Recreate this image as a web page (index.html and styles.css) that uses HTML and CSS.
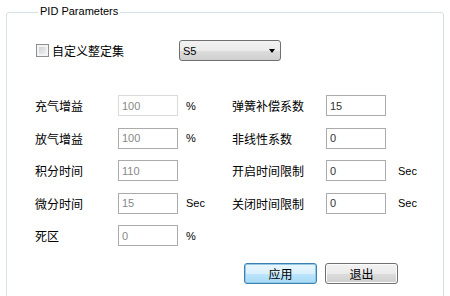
FILE: index.html
```html
<!DOCTYPE html>
<html>
<head>
  <meta charset="utf-8">
  <title>PID Parameters</title>
  <link rel="stylesheet" href="styles.css">
</head>
<body>
  <fieldset class="group">
    <legend>PID Parameters</legend>

    <div class="preset">
      <label class="check"><span class="box"></span>自定义整定集</label>
      <div class="combo">
        <span class="comboText">S5</span>
        <span class="arrow"></span>
      </div>
    </div>

    <div class="params">
      <span class="label">充气增益</span>
      <input class="field dim light" type="text" value="100" readonly>
      <span class="unit">%</span>
      <span class="label">弹簧补偿系数</span>
      <input class="field" type="text" value="15" readonly>
      <span class="unit right"></span>

      <span class="label">放气增益</span>
      <input class="field dim" type="text" value="100" readonly>
      <span class="unit">%</span>
      <span class="label">非线性系数</span>
      <input class="field" type="text" value="0" readonly>
      <span class="unit right"></span>

      <span class="label">积分时间</span>
      <input class="field dim" type="text" value="110" readonly>
      <span class="unit"></span>
      <span class="label">开启时间限制</span>
      <input class="field" type="text" value="0" readonly>
      <span class="unit right">Sec</span>

      <span class="label">微分时间</span>
      <input class="field dim" type="text" value="15" readonly>
      <span class="unit">Sec</span>
      <span class="label">关闭时间限制</span>
      <input class="field" type="text" value="0" readonly>
      <span class="unit right">Sec</span>

      <span class="label">死区</span>
      <input class="field dim" type="text" value="0" readonly>
      <span class="unit">%</span>
    </div>

    <div class="actions">
      <button class="btn default">应用</button>
      <button class="btn">退出</button>
    </div>
  </fieldset>
</body>
</html>
```

FILE: styles.css
```css
html, body {
  margin: 0;
  height: 100%;
}
body {
  background-color: #fff;
  font-family: "Liberation Sans", Arial, sans-serif;
  font-size: 11px;
  color: #000;
  overflow: hidden;
}
.group {
  margin: 5px 6px 0 6px;
  padding: 0 0 0 28px;
  height: 300px;
  border: 1px solid #d5dfe5;
  border-radius: 3px;
}
.group legend {
  margin-left: 3px;
  padding: 0 2px 2px 2px;
  line-height: 12px;
  font-size: 11px;
}
.preset {
  display: flex;
  align-items: center;
  margin-top: 21px;
  height: 21px;
}
.check {
  display: flex;
  align-items: center;
  width: 143px;
  margin-left: 1px;
  font-family: "Noto Sans CJK SC", sans-serif;
  font-size: 12px;
}
.box {
  width: 11px;
  height: 11px;
  margin-right: 3px;
  border: 1px solid #8e8f8f;
  background: linear-gradient(135deg, #c5c8cc 0%, #e4e6e8 60%, #f4f4f4 100%);
  box-shadow: inset 0 0 0 2px #f4f4f4;
}
.combo {
  display: flex;
  align-items: center;
  justify-content: space-between;
  box-sizing: border-box;
  width: 102px;
  height: 21px;
  padding: 0 5px 0 3px;
  border: 1px solid #707070;
  border-radius: 3px;
  background: linear-gradient(#f2f2f2 0%, #ebebeb 50%, #dddddd 50%, #cfcfcf 100%);
}
.arrow {
  width: 0;
  height: 0;
  border-left: 3.5px solid transparent;
  border-right: 3.5px solid transparent;
  border-top: 4px solid #000;
}
.params {
  display: grid;
  grid-template-columns: 83px 60px 54px 94px 60px auto;
  grid-auto-rows: 21px;
  row-gap: 11.5px;
  align-items: center;
  margin-top: 34px;
}
.label {
  font-family: "Noto Sans CJK SC", sans-serif;
  font-size: 12px;
}
.field {
  box-sizing: border-box;
  width: 60px;
  height: 21px;
  margin: 0;
  padding: 0 3px;
  border: 1px solid #ababab;
  font-family: "Liberation Sans", Arial, sans-serif;
  font-size: 11px;
  color: #333;
  background: #fff;
  outline: none;
}
.field.dim {
  color: #888;
}
.field.light {
  border-color: #dadada;
}
.unit {
  padding-left: 8px;
}
.unit.right {
  padding-left: 12px;
}
.actions {
  display: flex;
  gap: 8px;
  margin: 17px 0 0 209px;
}
.btn {
  box-sizing: border-box;
  width: 73px;
  height: 21px;
  padding: 0;
  border: 1px solid #707070;
  border-radius: 3px;
  font-family: "Noto Sans CJK SC", sans-serif;
  font-size: 12px;
  line-height: 17px;
  color: #000;
  background: linear-gradient(#f2f2f2 0%, #ebebeb 50%, #dddddd 50%, #cfcfcf 100%);
  box-shadow: inset 0 0 0 1px #fcfcfc;
}
.btn.default {
  border-color: #3c7fb1;
  background: linear-gradient(#eaf6fd 0%, #d9f0fc 50%, #bee6fd 50%, #a7d9f5 100%);
  box-shadow: inset 0 0 0 1px #93c9e6;
}
```
